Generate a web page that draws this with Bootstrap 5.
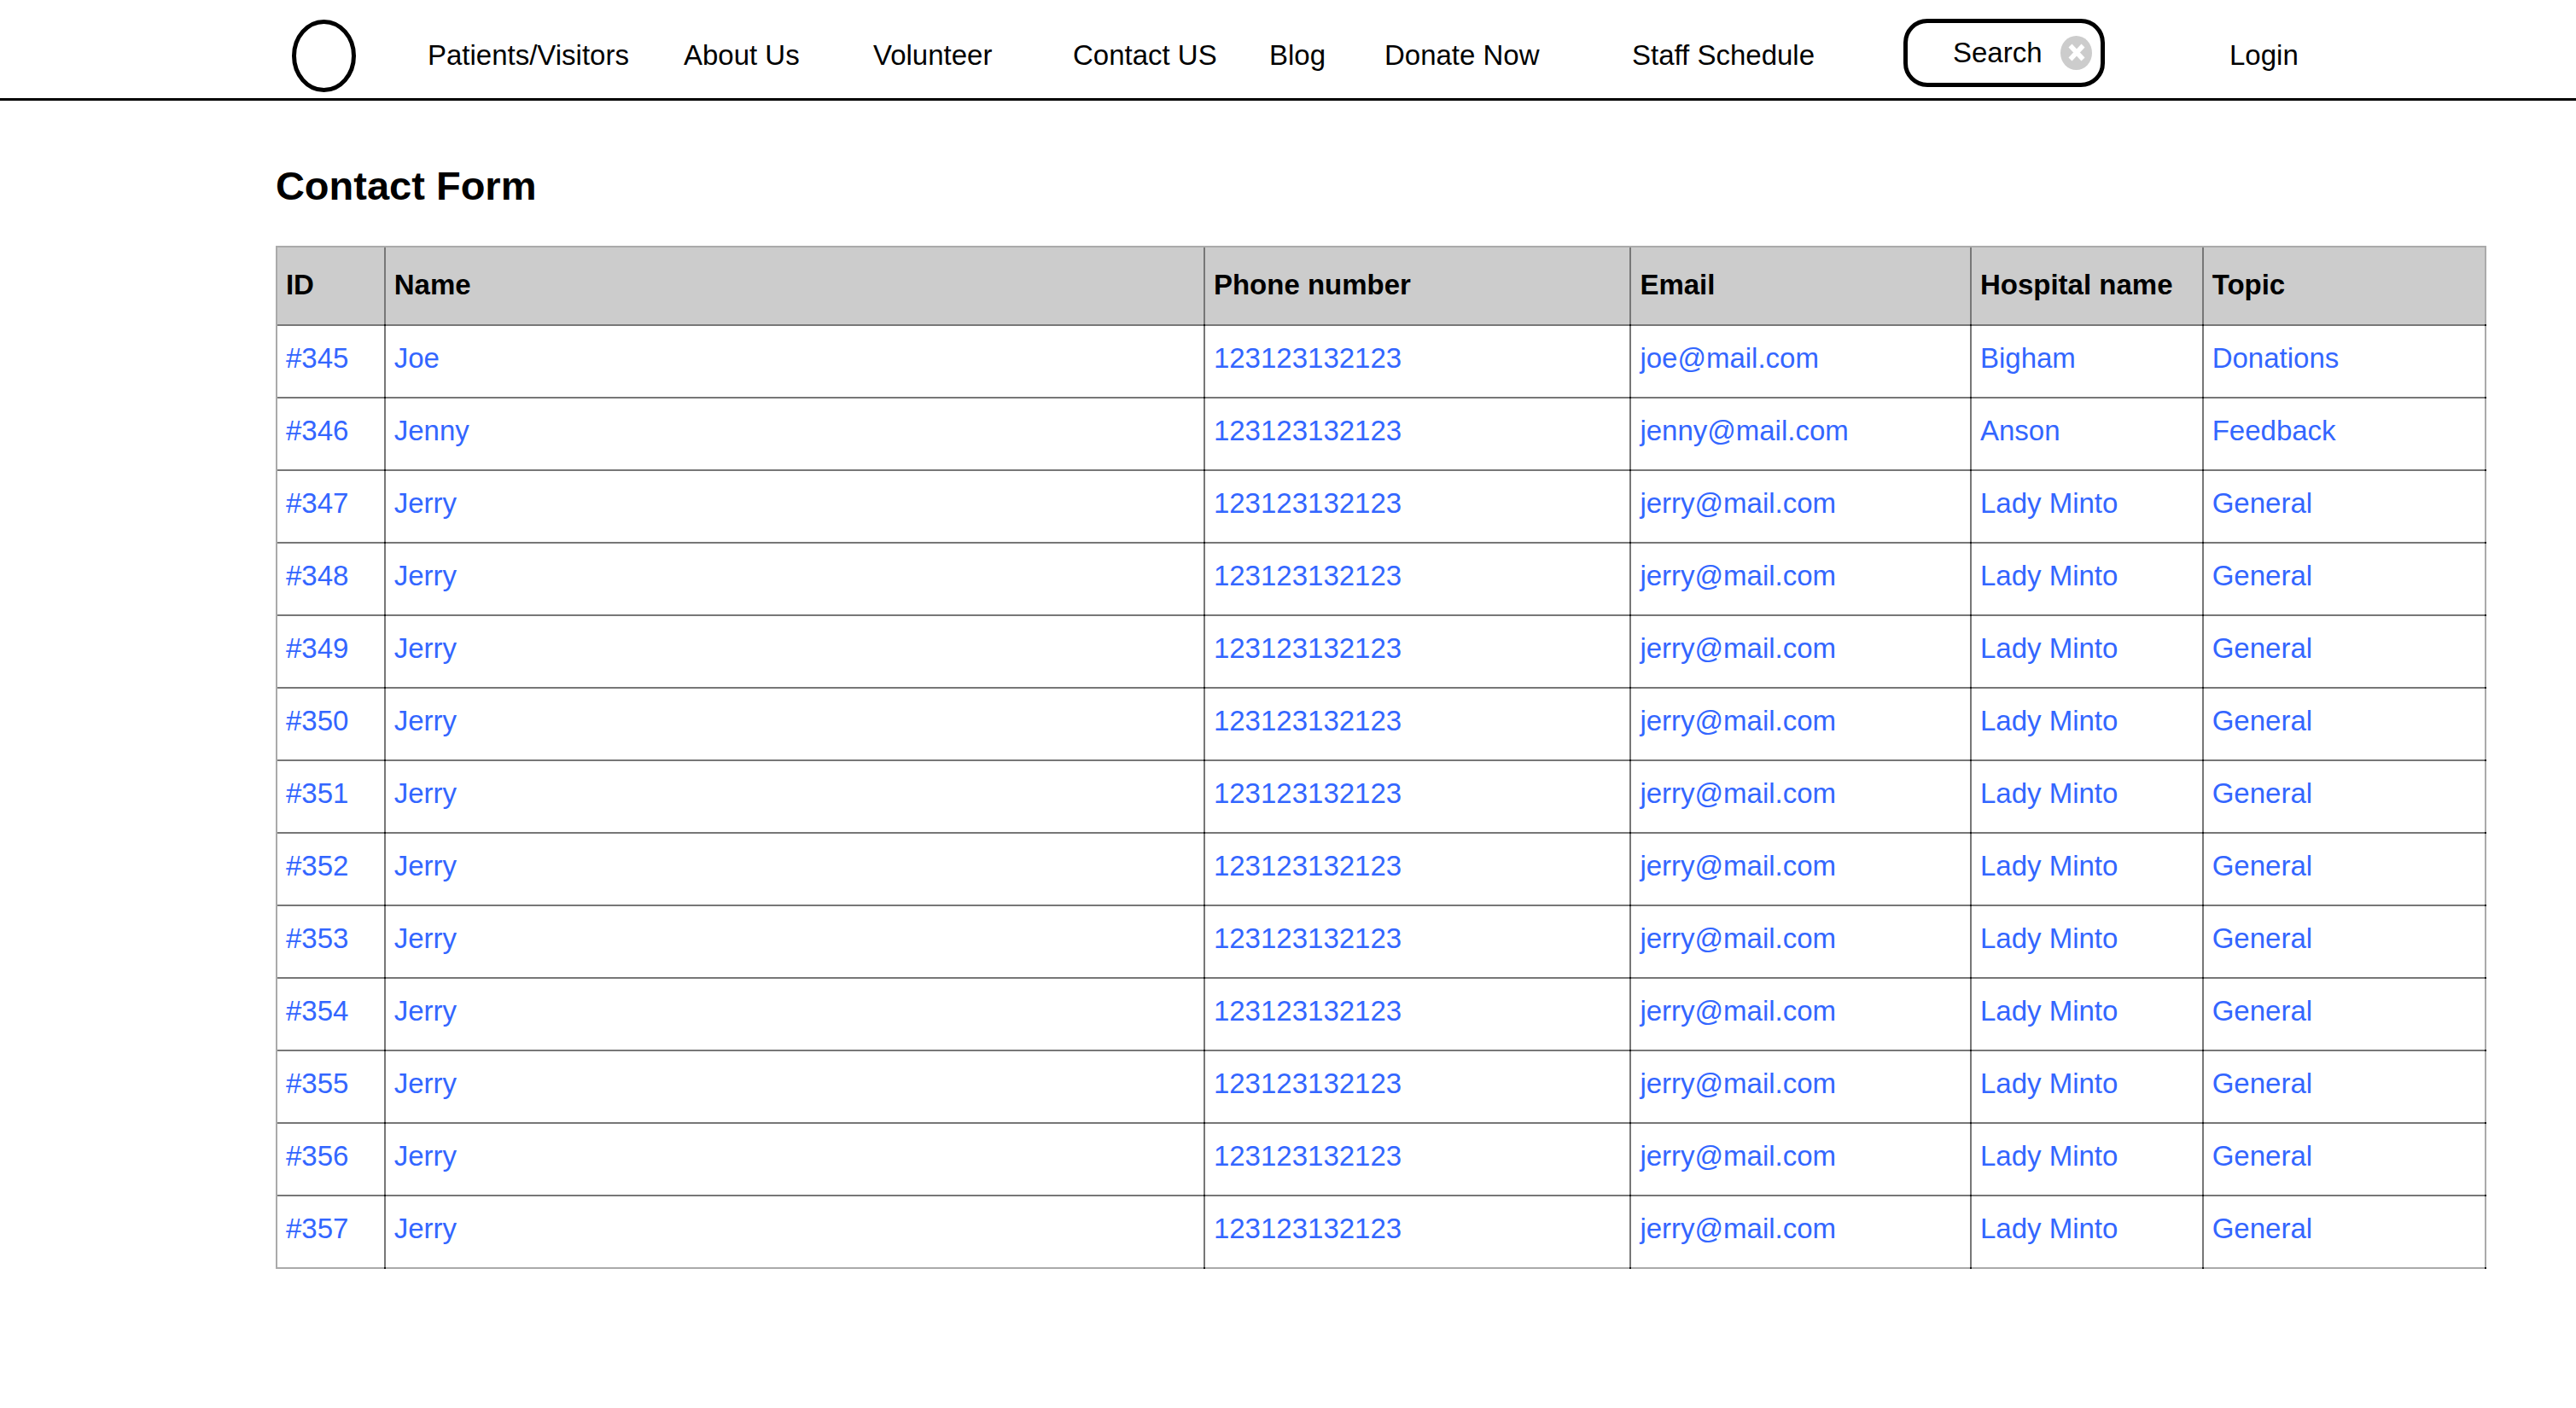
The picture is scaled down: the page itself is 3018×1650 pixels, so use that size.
<!DOCTYPE html>
<html lang="en">
<head>
<meta charset="utf-8">
<meta name="viewport" content="width=device-width, initial-scale=1">
<title>Contact Form</title>
<link href="https://cdn.jsdelivr.net/npm/bootstrap@5.3.0/dist/css/bootstrap.min.css" rel="stylesheet">
<style>
body { font-family: "Liberation Sans", Arial, sans-serif; font-size: 33px; line-height: 40px; color: #000; background: #fff; }
.site-header { height: 118px; border-bottom: 3px solid #000; }
.site-nav { display: grid; width: 100%; height: 100%; align-items: center; padding: 15px 0 0 11.33%;
  grid-template-columns: 159fr 300fr 222fr 234fr 230fr 135fr 290fr 318fr 382fr 406fr; }
.site-nav a { color: #000; text-decoration: none; white-space: nowrap; }
.brand-mark, .brand-mark svg { display: block; width: 75px; height: 85px; }
.search-box { width: 236px; height: 80px; border: 5px solid #000; border-radius: 28px; padding: 0 10px 0 53px; margin-bottom: 6px; }
.search-box input { width: 112px; height: 40px; border: 0; padding: 0; background: transparent; color: #000; outline-offset: 4px; }
.search-box input::placeholder { color: #000; opacity: 1; }
.clear-btn { width: 37px; height: 40px; border: 0; padding: 0; background: transparent; }
.clear-btn svg { display: block; }
.page-body { padding: 72px 3.48% 60px 10.7%; }
.page-title { font-size: 47px; line-height: 56px; font-weight: 700; margin: 0 0 42px; }
.contact-table { width: 100%; table-layout: fixed; border-collapse: separate; border-spacing: 0; border-top: 2px solid #aaa; border-left: 2px solid #aaa; }
.contact-table th, .contact-table td { position: relative; text-align: left; border: solid #777; border-width: 0 2px 2px 0; padding: 18px 10px 25px; white-space: nowrap; }
.contact-table th { background: #ccc; font-weight: 700; padding: 24px 10px 26px; }
.contact-table tr > :last-child { border-right-color: #aaa; }
.contact-table tbody tr:last-child td { border-bottom-color: #aaa; }
/* dark joint where two grid lines cross */
.contact-table th::after, .contact-table td::after { content: ""; position: absolute; right: -2px; bottom: -2px; width: 2px; height: 2px; background: #111; }
.contact-table a { color: #36f; text-decoration: none; }
</style>
<script src="https://cdn.jsdelivr.net/npm/bootstrap@5.3.0/dist/js/bootstrap.bundle.min.js"></script>
</head>
<body>
<header class="site-header">
  <nav class="site-nav" aria-label="Main">
    <a class="brand-mark" href="#" aria-label="Home"><svg viewBox="0 0 75 85"><ellipse cx="37.500" cy="42.500" rx="35" ry="40" fill="#fff" stroke="#000" stroke-width="5"/></svg></a>
    <a href="#">Patients/Visitors</a>
    <a href="#">About Us</a>
    <a href="#">Volunteer</a>
    <a href="#">Contact US</a>
    <a href="#">Blog</a>
    <a href="#">Donate Now</a>
    <a href="#">Staff Schedule</a>
    <form class="search-box d-flex align-items-center justify-content-between" role="search">
      <input type="text" placeholder="Search" aria-label="Search">
      <button class="clear-btn" type="reset" aria-label="Clear search"><svg width="37" height="40" viewBox="0 0 37 40"><ellipse cx="18.500" cy="20" rx="18.500" ry="20" fill="#ccc"/><path d="M11.500 11.500 L26.500 27.500 M26.500 11.500 L11.500 27.500" stroke="#fff" stroke-width="5.500"/></svg></button>
    </form>
    <a href="#">Login</a>
  </nav>
</header>
<main class="page-body">
  <h1 class="page-title">Contact Form</h1>
  <table class="contact-table">
    <colgroup><col style="width:4.9%"><col style="width:37.1%"><col style="width:19.3%"><col style="width:15.4%"><col style="width:10.5%"><col style="width:12.8%"></colgroup>
    <thead><tr><th scope="col">ID</th><th scope="col">Name</th><th scope="col">Phone number</th><th scope="col">Email</th><th scope="col">Hospital name</th><th scope="col">Topic</th></tr></thead>
    <tbody>
      <tr><td><a href="#">#345</a></td><td><a href="#">Joe</a></td><td><a href="#">123123132123</a></td><td><a href="#">joe@mail.com</a></td><td><a href="#">Bigham</a></td><td><a href="#">Donations</a></td></tr>
      <tr><td><a href="#">#346</a></td><td><a href="#">Jenny</a></td><td><a href="#">123123132123</a></td><td><a href="#">jenny@mail.com</a></td><td><a href="#">Anson</a></td><td><a href="#">Feedback</a></td></tr>
      <tr><td><a href="#">#347</a></td><td><a href="#">Jerry</a></td><td><a href="#">123123132123</a></td><td><a href="#">jerry@mail.com</a></td><td><a href="#">Lady Minto</a></td><td><a href="#">General</a></td></tr>
      <tr><td><a href="#">#348</a></td><td><a href="#">Jerry</a></td><td><a href="#">123123132123</a></td><td><a href="#">jerry@mail.com</a></td><td><a href="#">Lady Minto</a></td><td><a href="#">General</a></td></tr>
      <tr><td><a href="#">#349</a></td><td><a href="#">Jerry</a></td><td><a href="#">123123132123</a></td><td><a href="#">jerry@mail.com</a></td><td><a href="#">Lady Minto</a></td><td><a href="#">General</a></td></tr>
      <tr><td><a href="#">#350</a></td><td><a href="#">Jerry</a></td><td><a href="#">123123132123</a></td><td><a href="#">jerry@mail.com</a></td><td><a href="#">Lady Minto</a></td><td><a href="#">General</a></td></tr>
      <tr><td><a href="#">#351</a></td><td><a href="#">Jerry</a></td><td><a href="#">123123132123</a></td><td><a href="#">jerry@mail.com</a></td><td><a href="#">Lady Minto</a></td><td><a href="#">General</a></td></tr>
      <tr><td><a href="#">#352</a></td><td><a href="#">Jerry</a></td><td><a href="#">123123132123</a></td><td><a href="#">jerry@mail.com</a></td><td><a href="#">Lady Minto</a></td><td><a href="#">General</a></td></tr>
      <tr><td><a href="#">#353</a></td><td><a href="#">Jerry</a></td><td><a href="#">123123132123</a></td><td><a href="#">jerry@mail.com</a></td><td><a href="#">Lady Minto</a></td><td><a href="#">General</a></td></tr>
      <tr><td><a href="#">#354</a></td><td><a href="#">Jerry</a></td><td><a href="#">123123132123</a></td><td><a href="#">jerry@mail.com</a></td><td><a href="#">Lady Minto</a></td><td><a href="#">General</a></td></tr>
      <tr><td><a href="#">#355</a></td><td><a href="#">Jerry</a></td><td><a href="#">123123132123</a></td><td><a href="#">jerry@mail.com</a></td><td><a href="#">Lady Minto</a></td><td><a href="#">General</a></td></tr>
      <tr><td><a href="#">#356</a></td><td><a href="#">Jerry</a></td><td><a href="#">123123132123</a></td><td><a href="#">jerry@mail.com</a></td><td><a href="#">Lady Minto</a></td><td><a href="#">General</a></td></tr>
      <tr><td><a href="#">#357</a></td><td><a href="#">Jerry</a></td><td><a href="#">123123132123</a></td><td><a href="#">jerry@mail.com</a></td><td><a href="#">Lady Minto</a></td><td><a href="#">General</a></td></tr>
    </tbody>
  </table>
</main>
</body>
</html>
